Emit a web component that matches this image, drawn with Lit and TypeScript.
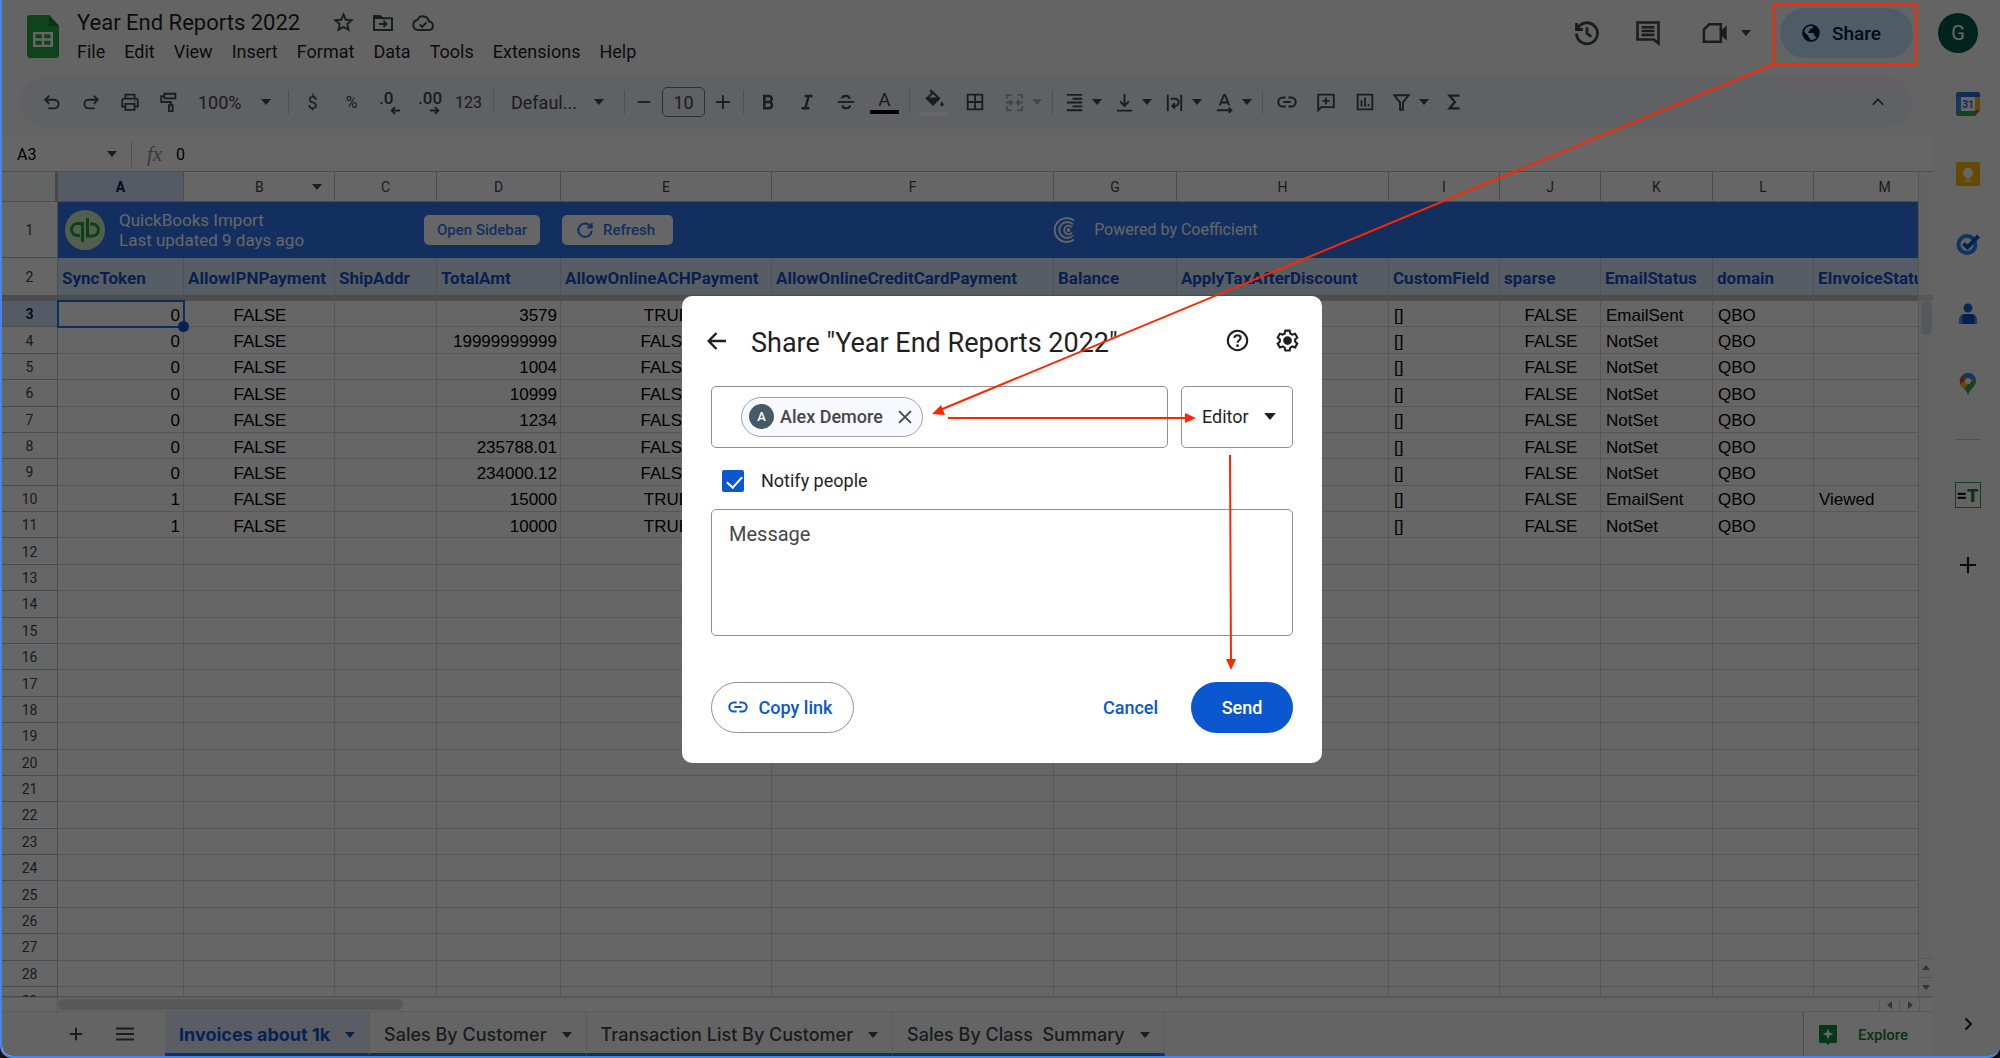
import { LitElement, html, css, svg, nothing } from "lit";
import { customElement } from "lit/decorators.js";
import { classMap } from "lit/directives/class-map.js";

/* ---------- icons (24 x 24 grid, stroked unless noted) ---------- */

const shapes: Record<string, unknown> = {
  star: svg`<path d="M12 3.500l2.400 5.700 6.100.5-4.600 4 1.400 6-5.300-3.200-5.300 3.200 1.400-6-4.600-4 6.100-.5z"/>`,
  move: svg`<path d="M3 5h6l2 2.200h10V19H3z"/><path d="M3 6.500h8" stroke-width="3"/><path d="M8 13h7M12.500 10l3 3-3 3"/>`,
  cloud: svg`<path d="M7 19a5 5 0 0 1-.6-9.900A6 6 0 0 1 17.900 10.500 4.300 4.300 0 0 1 18.500 19z"/><path d="M8.800 13.500l2.400 2.400 4.200-4.400"/>`,
  undo: svg`<path d="M5 9.500h9.500a4.700 4.700 0 0 1 0 9.400H8M9 5L4.600 9.500 9 14"/>`,
  redo: svg`<path d="M19 9.500H9.500a4.700 4.700 0 0 0 0 9.400H16M15 5l4.400 4.500L15 14"/>`,
  print: svg`<path d="M7 8V4h10v4M7 17H3.500v-6.500A2.200 2.200 0 0 1 5.700 8.300h12.600a2.200 2.200 0 0 1 2.200 2.200V17H17M7 14h10v6.500H7z"/><path d="M17 11.300h1"/>`,
  paint: svg`<path d="M7 3h12v5H7zM7 5.500H3.500V12H14v3"/><path d="M12 15.500h4V22h-4z"/>`,
  decDown: svg`<path d="M22 12H4M11 4.500L3.500 12l7.500 7.500"/>`,
  decUp: svg`<path d="M2 12h18M13 4.500l7.500 7.500-7.500 7.500"/>`,
  minus: svg`<path d="M5 12h14"/>`,
  plus: svg`<path d="M4.500 12h15M12 4.500v15"/>`,
  bold: svg`<path stroke-width="2.800" d="M8 5.500h4.800a3.200 3.200 0 0 1 0 6.400H8zM8 11.900h5.400a3.500 3.500 0 0 1 0 6.900H8z"/>`,
  italic: svg`<path stroke-width="2.600" d="M9.500 5.500h8.500M6 18.800h8.500M13.900 5.500l-3.800 13.300"/>`,
  strike: svg`<path d="M3 12h18"/><path stroke-width="2.300" d="M16 8.500c-.3-2-2-3.200-4.200-3.200-2.100 0-4 1-4 3M8 15.800c.3 2 2 3 4.200 3 2.300 0 4.200-1.100 4.200-3.300"/>`,
  fill: svg`<path d="M8 2l3 3"/><path d="M11 4.500l6 6-6 6-6-6z"/><path d="M5.500 10.500h11L11 16z" fill="currentColor"/><path d="M20 13.500c1 1.500 1.600 2.300 1.600 3.200a1.600 1.600 0 0 1-3.200 0c0-.9.600-1.700 1.600-3.200z" fill="currentColor" stroke="none"/>`,
  borders: svg`<path d="M4 4h16v16H4zM12 4v16M4 12h16"/>`,
  merge: svg`<path d="M9 4H4v4M15 4h5v4M9 20H4v-4M15 20h5v-4M3 12h6.500M14.500 12H21M7 9.300L9.700 12 7 14.700M17 9.300L14.300 12l2.700 2.700"/>`,
  halign: svg`<path d="M4 4h16M10 8h10M4 12h16M10 16h10M4 20h16"/>`,
  valign: svg`<path d="M12 3v12M7.500 11l4.500 4.500 4.500-4.500M4 20.500h16"/>`,
  wrap: svg`<path d="M5 4v17M19 4v17M8 8h4.500a3.800 3.800 0 0 1 0 7.600H10M12.500 12.800l-2.800 2.800 2.800 2.800"/>`,
  rotate: svg`<path d="M7 15L11.500 4h1L17 15M8.500 12h7M4 20h15M16.500 17.300l2.800 2.700-2.800 2.700"/>`,
  link: svg`<path stroke-width="2.200" d="M10.500 7H7.500a5 5 0 0 0 0 10h3M13.500 7h3a5 5 0 0 1 0 10h-3M8 12h8"/>`,
  comment: svg`<path d="M3.500 21V4h17v13.500H7zM12 7v7.500M8.200 10.800h7.600"/>`,
  chart: svg`<path d="M4 4h16v16H4zM8.200 10v7M12 7v10M15.800 14v3"/>`,
  filter: svg`<path d="M4.500 4.500h15L13.500 12v7.500h-3V12z"/>`,
  sigma: svg`<path stroke-width="2.400" d="M18 5H7l6 7-6 7h11"/>`,
  up: svg`<path d="M6.500 15l5.500-6 5.500 6"/>`,
  right: svg`<path d="M9.500 6.500l5.500 5.500-5.500 5.500"/>`,
  history: svg`<path d="M3.800 8.500A9 9 0 1 1 3 12.500M3 3.500V9h5.500M12 7v5.500l3.800 2.600"/>`,
  notes: svg`<path d="M3 3h18v18l-4-3.500H3z"/><path d="M6.500 7h11M6.500 10.300h11M6.500 13.600h11"/>`,
  meet: svg`<path d="M7 4.500h10v15H2.500V9z"/><path d="M17 11l4.500-4.500v11L17 13z" fill="currentColor" stroke-width="1"/>`,
  globe: svg`<circle cx="12" cy="12" r="9.500"/><path stroke="none" fill="currentColor" d="M2.800 9.500L9 15.500v1.500l2 2v2.800C5 21 1.500 15.500 2.800 9.500zM14.800 2.900V5l-2 2H10.800v2.200l-2 1v1.800h6l1 1v3h1.800l1.900 2.400C23.500 14 22.500 5.500 14.800 2.900z"/>`,
  menu: svg`<path d="M3 6.500h18M3 12h18M3 17.500h18"/>`,
  back: svg`<path d="M21 12H4M11.500 4L3.700 12l7.800 8"/>`,
  help: svg`<circle cx="12" cy="12" r="9.300"/><path d="M9 9.600c.2-1.700 1.400-2.600 3-2.600s3 1 3 2.500c0 2.200-3 2.400-3 4.700"/><circle cx="12" cy="17" r="1.300" fill="currentColor" stroke="none"/>`,
  gear: svg`<path d="M9.900 2.500h4.200l.6 2.800 1.900 1.100 2.700-.9 2.100 3.600-2.100 1.900v2.100l2.100 1.900-2.100 3.600-2.700-.9-1.900 1.100-.6 2.800H9.900l-.6-2.800-1.900-1.100-2.700.9-2.100-3.600 2.100-1.900v-2.100L2.600 9.100l2.100-3.600 2.700.9 1.900-1.100z"/><circle cx="12" cy="12" r="3.200" fill="currentColor"/>`,
  close: svg`<path d="M5.500 5.500l13 13M18.500 5.500l-13 13"/>`,
  reload: svg`<path stroke-width="2.400" d="M18.500 7.500A8 8 0 1 0 20 13M20 3.500V9h-5.500"/>`,
};

const icon = (name: string, size = 24, weight = 2) => html`<svg
  class="ico" width=${size} height=${size} viewBox="0 0 24 24" fill="none"
  stroke="currentColor" stroke-width=${weight} aria-hidden="true">${shapes[name]}</svg>`;

const caret = () => html`<svg class="caret" width="10" height="6" viewBox="0 0 10 6" aria-hidden="true">
  <path d="M0 0h10L5 6z" fill="currentColor"/></svg>`;

const sheetsLogo = html`<svg width="32" height="43" viewBox="0 0 32 43" aria-hidden="true">
  <path d="M3 0h19l10 11v29a3 3 0 0 1-3 3H3a3 3 0 0 1-3-3V3a3 3 0 0 1 3-3z" fill="#23a847"/>
  <path d="M22 0l10 11H22z" fill="#128034"/>
  <path d="M6 17h20v15H6zM8.500 19.300v4h6.300v-4zM17.200 19.300v4h6.300v-4zM8.500 25.700v4h6.300v-4zM17.200 25.700v4h6.300v-4z" fill="#fff" fill-rule="evenodd"/>
</svg>`;

const qbLogo = html`<svg width="40" height="40" viewBox="0 0 40 40" aria-hidden="true">
  <circle cx="20" cy="20" r="20" fill="#cdeec3"/>
  <g fill="none" stroke="#25a03b" stroke-width="3">
    <path d="M17.500 32V13.500H12.500a6 6 0 0 0 0 12h2.500"/>
    <path d="M22.500 8v18h5a6 6 0 0 0 0-12H25"/>
  </g></svg>`;

const coefficientLogo = html`<svg width="24" height="26" viewBox="0 0 24 26" fill="none" stroke="#fff" stroke-width="1.800" aria-hidden="true">
  <path d="M21 3.500A12 12 0 1 0 21 22.500"/><path d="M20 7.500A8 8 0 1 0 20 18.500"/><path d="M19 10.500A4.300 4.300 0 1 0 19 15.500"/>
  <circle cx="15.500" cy="13" r="1" fill="#fff"/></svg>`;

const sideIcons = [
  { label: "Calendar", art: html`<svg width="24" height="24" viewBox="0 0 24 24"><path d="M2 0h20v6H0V2a2 2 0 0 1 2-2z" fill="#2f6fe0"/><path d="M0 5h5v14H0z" fill="#4285f4"/><path d="M19 5h5v13h-5z" fill="#fbbc04"/><path d="M19 0h3a2 2 0 0 1 2 2v3h-5z" fill="#1967d2"/><path d="M0 19h19v5H2a2 2 0 0 1-2-2z" fill="#34a853"/><path d="M19 24v-6h5z" fill="#ea4335"/><path d="M5 5h14v14H5z" fill="#fff"/><text class="day" x="12" y="16" text-anchor="middle" fill="#1a73e8">31</text></svg>` },
  { label: "Keep", art: html`<svg width="24" height="24" viewBox="0 0 24 24"><rect width="24" height="24" rx="2" fill="#fbbc04"/><circle cx="12" cy="11" r="5" fill="#fff"/><path d="M10 14h4v2.500h-4zM9.500 18h5v1.500h-5z" fill="#fff"/></svg>` },
  { label: "Tasks", art: html`<svg width="24" height="24" viewBox="0 0 24 24" fill="none"><circle cx="11" cy="12.500" r="8.500" stroke="#2684fc" stroke-width="4"/><path d="M7.500 11.500l4 4L22.500 4" stroke="#0b57d0" stroke-width="4"/></svg>` },
  { label: "Contacts", art: html`<svg width="24" height="24" viewBox="0 0 24 24"><circle cx="12" cy="6" r="4.500" fill="#1a62e0"/><path d="M8 12h8a5 5 0 0 1 5 5v5H3v-5a5 5 0 0 1 5-5z" fill="#5c8fef"/><path d="M9.500 12h6a3 3 0 0 1 3 3v7h-11a1 1 0 0 1-1-1v-6a3 3 0 0 1 3-3z" fill="#0b50c8"/></svg>` },
  { label: "Maps", art: html`<svg width="24" height="24" viewBox="0 0 24 24"><path d="M12 1a8 8 0 0 1 8 8c0 5.500-6 7.500-8 14-2-6.500-8-8.500-8-14a8 8 0 0 1 8-8z" fill="#34a853"/><path d="M12 1a8 8 0 0 1 7.500 5.200L12 9 6.500 3.200A8 8 0 0 1 12 1z" fill="#4285f4"/><path d="M6.500 3.200L12 9l-7.200 4A8 8 0 0 1 6.500 3.200z" fill="#ea4335"/><path d="M17 8l-9.500 9c-1.500-1.800-2.700-3-3.200-5l6-5z" fill="#fbbc04"/><circle cx="12" cy="9" r="3" fill="#fff"/></svg>` },
];

/* ---------- sheet data ---------- */

interface Column { letter: string; title: string; align: string }
const columns: Column[] = [
  { letter: "A", title: "SyncToken", align: "end" },
  { letter: "B", title: "AllowIPNPayment", align: "mid" },
  { letter: "C", title: "ShipAddr", align: "start" },
  { letter: "D", title: "TotalAmt", align: "end" },
  { letter: "E", title: "AllowOnlineACHPayment", align: "mid" },
  { letter: "F", title: "AllowOnlineCreditCardPayment", align: "mid" },
  { letter: "G", title: "Balance", align: "end" },
  { letter: "H", title: "ApplyTaxAfterDiscount", align: "mid" },
  { letter: "I", title: "CustomField", align: "start" },
  { letter: "J", title: "sparse", align: "mid" },
  { letter: "K", title: "EmailStatus", align: "start" },
  { letter: "L", title: "domain", align: "start" },
  { letter: "M", title: "EInvoiceStatus", align: "start" },
];

const record = (token: string, total: string, ach: string, email: string, viewed = "") =>
  [token, "FALSE", "", total, ach, "", "", "", "[]", "FALSE", email, "QBO", viewed];

const records: string[][] = [
  record("0", "3579", "TRUE", "EmailSent"),
  record("0", "19999999999", "FALSE", "NotSet"),
  record("0", "1004", "FALSE", "NotSet"),
  record("0", "10999", "FALSE", "NotSet"),
  record("0", "1234", "FALSE", "NotSet"),
  record("0", "235788.01", "FALSE", "NotSet"),
  record("0", "234000.12", "FALSE", "NotSet"),
  record("1", "15000", "TRUE", "EmailSent", "Viewed"),
  record("1", "10000", "TRUE", "NotSet"),
];

const base = css`
  * { box-sizing: border-box; }
  button, input, select, textarea { font: inherit; color: inherit; background: none; border: 0; padding: 0; margin: 0; border-radius: 0; outline: none; }
  button { display: flex; align-items: center; justify-content: center; white-space: nowrap; }
  select { appearance: none; }
  svg { display: block; flex: none; }
`;

@customElement("sheet-header")
export class SheetHeader extends LitElement {
  static styles = [base, css`
    :host { display: flex; align-items: center; height: 77px; padding: 0 22px 0 25px; color: #444746; }
    .logo { padding-bottom: 4px; }
    .doc { flex: 1; padding: 4px 0 0 18px; align-self: flex-start; }
    .line { display: flex; align-items: center; gap: 16px; height: 35px; padding-top: 2px; }
    .title { margin: 0 16px 0 0; font-size: 22px; font-weight: 400; line-height: 32px; color: #1f1f1f; white-space: nowrap; }
    .menus { display: flex; gap: 19px; height: 26px; color: #1f1f1f; font-size: 18px; line-height: 26px; }
    .actions { display: flex; align-items: center; align-self: flex-start; height: 66px; }
    .tool { width: 61px; height: 40px; }
    .meet { width: 73px; gap: 12px; justify-content: flex-end; }
    .share { gap: 11px; width: 133px; height: 50px; margin-left: 29px; padding-left: 21px; justify-content: flex-start; border-radius: 25px; background: #c2e7ff; color: #001d35; font-size: 19px; font-weight: 500; }
    .avatar { width: 40px; height: 40px; margin-left: 25px; border-radius: 50%; background: #00594a; color: #fff; font-size: 20px; }
  `];

  render() {
    const menus = ["File", "Edit", "View", "Insert", "Format", "Data", "Tools", "Extensions", "Help"];
    return html`
      <div class="logo">${sheetsLogo}</div>
      <div class="doc">
        <div class="line">
          <h1 class="title">Year End Reports 2022</h1>
          <button aria-label="Star">${icon("star", 23)}</button>
          <button aria-label="Move">${icon("move", 24)}</button>
          <button aria-label="Saved to Drive">${icon("cloud", 24)}</button>
        </div>
        <nav class="menus">${menus.map((m) => html`<button>${m}</button>`)}</nav>
      </div>
      <div class="actions">
        <button class="tool" aria-label="Version history">${icon("history", 28, 2.4)}</button>
        <button class="tool" aria-label="Comments">${icon("notes", 28, 2.2)}</button>
        <button class="tool meet" aria-label="Join a call">${icon("meet", 28, 2.2)}${caret()}</button>
        <button class="share">${icon("globe", 20, 2)}Share</button>
        <button class="avatar" aria-label="Account G">G</button>
      </div>`;
  }
}

@customElement("sheet-toolbar")
export class SheetToolbar extends LitElement {
  static styles = [base, css`
    :host { display: flex; align-items: center; height: 50px; margin: 0 21px 0 18px; padding: 0 15px 0 12px; border-radius: 25px; background: #edf2fa; color: #444746; font-size: 18px; }
    .slot { width: 39px; height: 36px; flex: none; }
    .wide { width: 44px; }
    .step { width: 30px; }
    .split { width: 50px; gap: 6px; }
    .off { opacity: 0.4; }
    .small { font-size: 16px; }
    .rule { flex: none; width: 10px; height: 24px; display: flex; justify-content: center; }
    .rule::before { content: ""; width: 1px; background: #c7cad0; }
    .pick { display: flex; align-items: center; width: 95px; height: 36px; padding: 0 12px 0 10px; flex: none; }
    .pick.font { width: 121px; padding: 0 15px 0 13px; }
    .pick select { flex: 1; min-width: 0; }
    .size { flex: none; width: 43px; height: 30px; margin: 0 3px; border: 1px solid #747775; border-radius: 5px; text-align: center; }
    .stack { flex-direction: column; }
    .stack .bar { width: 29px; height: 4px; background: #000; }
    .stack .bar.pale { background: #fff; }
    .glyph { line-height: 20px; font-size: 19px; }
    .dec { flex-direction: column; align-items: flex-start; padding-left: 8px; line-height: 16px; font-size: 17px; font-weight: 500; }
    .dec .ico { margin: -1px 0 -2px 11px; }
    .fold { margin-left: auto; }
  `];

  private tool(name: string, label: string, cls = "") {
    return html`<button class="slot ${cls}" aria-label=${label}>${icon(name, 22)}</button>`;
  }

  private split(name: string, label: string, off = false) {
    return html`<button class=${classMap({ slot: true, split: true, off })} aria-label=${label}>${icon(name, 23)}${caret()}</button>`;
  }

  render() {
    const rule = html`<span class="rule"></span>`;
    return html`
      ${this.tool("undo", "Undo")}${this.tool("redo", "Redo")}${this.tool("print", "Print")}${this.tool("paint", "Paint format")}
      <label class="pick"><select aria-label="Zoom"><option>100%</option></select>${caret()}</label>
      ${rule}
      <button class="slot">$</button>
      <button class="slot small">%</button>
      <button class="slot dec" aria-label="Fewer decimals">.0${icon("decDown", 11, 4)}</button>
      <button class="slot dec" aria-label="More decimals">.00${icon("decUp", 11, 4)}</button>
      <button class="slot small">123</button>
      ${rule}
      <label class="pick font"><select aria-label="Font"><option>Defaul...</option></select>${caret()}</label>
      ${rule}
      ${this.tool("minus", "Smaller", "step")}
      <input class="size" aria-label="Font size" value="10">
      ${this.tool("plus", "Larger", "step")}
      ${rule}
      ${this.tool("bold", "Bold")}${this.tool("italic", "Italic")}${this.tool("strike", "Strikethrough")}
      <button class="slot stack" aria-label="Text color"><span class="glyph">A</span><span class="bar"></span></button>
      ${rule}
      <button class="slot stack" aria-label="Fill color">${icon("fill", 24)}<span class="bar pale"></span></button>
      ${this.tool("borders", "Borders", "wide")}
      ${this.split("merge", "Merge cells", true)}
      ${rule}
      ${this.split("halign", "Horizontal align")}${this.split("valign", "Vertical align")}${this.split("wrap", "Text wrapping")}${this.split("rotate", "Text rotation")}
      ${rule}
      ${this.tool("link", "Insert link")}${this.tool("comment", "Insert comment")}${this.tool("chart", "Insert chart")}
      ${this.split("filter", "Create a filter")}
      ${this.tool("sigma", "Functions")}
      ${this.tool("up", "Hide the menus", "fold")}`;
  }
}

@customElement("sheet-grid")
export class SheetGrid extends LitElement {
  static styles = [base, css`
    :host { flex: 1; min-height: 0; display: grid; grid-template-columns: minmax(0, 1fr) 14px; grid-template-rows: minmax(0, 1fr) 14px; background: #fff; border-top: 1px solid #c0c0c0; }
    .clip { overflow: hidden; border-right: 1px solid #d5d5d5; }
    .table { display: grid; height: 100%; grid-template-rows: 30px 56px 43px repeat(26, minmax(0, 1fr)) 10px; border-spacing: 0; font-family: "Liberation Sans", Arial, sans-serif; font-size: 17px; line-height: 20px; color: #000; }
    .group { display: contents; }
    .row { display: grid; min-height: 0; overflow: hidden; grid-template-columns: 56px 126px 151px 102px 124px 211px 282px 123px 212px 111px 101px 112px 101px 142px; }
    .row.current { overflow: visible; }
    .cell { display: flex; align-items: center; min-width: 0; min-height: 0; overflow: hidden; padding: 4px 4px 0; border: solid #dadada; border-width: 0 1px 1px 0; white-space: nowrap; }
    .start { padding-left: 5px; }
    .end { justify-content: flex-end; padding-right: 3px; }
    .mid { justify-content: center; padding-left: 6px; }
    .head { justify-content: center; padding: 1px 0 0; border-color: #c0c0c0; font-family: Roboto, sans-serif; font-size: 14px; font-weight: 400; color: #444746; }
    .head.picked { background: #d3e3fd; color: #041e49; font-weight: 700; }
    .corner { background: #f8f9fa; border-right: 3px solid #b7b7b7; }
    .head.has-menu { justify-content: flex-start; padding-left: 71px; gap: 48px; }
    .last { overflow: visible; align-items: flex-start; line-height: 26px; }
    .banner { grid-column: 2 / -1; display: flex; align-items: center; background: #2d75ee; color: #fff; font-family: Roboto, sans-serif; padding: 0 0 0 7px; overflow: hidden; }
    .sync { width: 319px; padding-left: 14px; font-size: 17px; line-height: 20px; white-space: nowrap; }
    .chip { height: 30px; padding: 0 13px; margin-right: 22px; border-radius: 5px; background: #fff; color: #2d75ee; font-size: 15px; font-weight: 500; }
    .chip.refresh { gap: 8px; padding-right: 18px; }
    .powered { display: flex; align-items: center; gap: 17px; margin-left: 358px; font-size: 16px; white-space: nowrap; }
    .titles .cell { border-bottom: 6px solid #c0c0c0; }
    .titles .field { padding: 2px 4px 0; background: #dae8fb; border-right-color: #c3ccd9; font-family: Roboto, sans-serif; font-size: 17px; font-weight: 700; color: #1450c8; }
    .focus { position: relative; overflow: visible; outline: 2px solid #1a73e8; outline-offset: -1px; }
    .focus::after { content: ""; position: absolute; right: -6px; bottom: -6px; width: 11px; height: 11px; border-radius: 50%; background: #0b57d0; }
    .vbar { display: flex; flex-direction: column; background: #f8f8f8; }
    .vtop { height: 123px; }
    .vstop { height: 6px; background: #dadce0; }
    .vthumb { width: 11px; height: 34px; margin: 0 auto; border-radius: 6px; background: #dadce0; }
    .arrows { display: flex; flex-direction: column; margin-top: auto; color: #80868b; border-top: 1px solid #e0e0e0; }
    .arrow { width: 14px; height: 19px; border-bottom: 1px solid #d5d5d5; }
    .hbar { grid-column: 1 / -1; display: flex; align-items: center; border-top: 1px solid #e0e0e0; color: #80868b; }
    .hgap { width: 56px; align-self: stretch; border-right: 1px solid #d5d5d5; }
    .hthumb { width: 345px; height: 11px; border-radius: 6px; background: #dadce0; }
    .harrow { width: 20px; height: 13px; border-left: 1px solid #e0e0e0; }
    .harrow.first { margin-left: auto; }
    .hend { width: 14px; height: 13px; border-left: 1px solid #e0e0e0; }
  `];

  private bodyRow(n: number) {
    const values = records[n - 3];
    const current = n === 3;
    return html`<tr class=${classMap({ row: true, current })}>
      <th class=${classMap({ cell: true, head: true, picked: current, last: n === 29 })} scope="row">${n}</th>
      ${columns.map((c, i) => html`<td class=${classMap({ cell: true, [c.align]: true, focus: current && i === 0 })}>${values ? values[i] : nothing}</td>`)}
    </tr>`;
  }

  private arrow(d: string, cls: string, label: string) {
    return html`<button class=${cls} aria-label=${label}><svg width="8" height="8" viewBox="0 0 8 8"><path d=${d} fill="currentColor"/></svg></button>`;
  }

  render() {
    const numbers = Array.from({ length: 27 }, (_, i) => i + 3);
    return html`
      <div class="clip">
        <table class="table">
          <thead class="group">
            <tr class="row">
              <th class="cell head corner"></th>
              ${columns.map((c) => html`<th scope="col" class=${classMap({ cell: true, head: true, picked: c.letter === "A", "has-menu": c.letter === "B" })}>${c.letter}${c.letter === "B" ? caret() : nothing}</th>`)}
            </tr>
          </thead>
          <tbody class="group">
            <tr class="row">
              <th class="cell head" scope="row">1</th>
              <td class="banner" colspan="13">
                ${qbLogo}
                <div class="sync">QuickBooks Import<br>Last updated 9 days ago</div>
                <button class="chip">Open Sidebar</button>
                <button class="chip refresh">${icon("reload", 20)}Refresh</button>
                <div class="powered">${coefficientLogo}Powered by Coefficient</div>
              </td>
            </tr>
            <tr class="row titles">
              <th class="cell head" scope="row">2</th>
              ${columns.map((c) => html`<td class="cell field">${c.title}</td>`)}
            </tr>
            ${numbers.map((n) => this.bodyRow(n))}
          </tbody>
        </table>
      </div>
      <div class="vbar">
        <span class="vtop"></span><span class="vstop"></span><span class="vthumb"></span>
        <div class="arrows">${this.arrow("M0 6h8L4 1z", "arrow", "Scroll up")}${this.arrow("M0 2h8L4 7z", "arrow", "Scroll down")}</div>
      </div>
      <div class="hbar">
        <span class="hgap"></span><span class="hthumb"></span>
        ${this.arrow("M6 0v8L1 4z", "harrow first", "Scroll left")}${this.arrow("M2 0v8l5-4z", "harrow", "Scroll right")}
        <span class="hend"></span>
      </div>`;
  }
}

@customElement("sheet-tabs")
export class SheetTabs extends LitElement {
  static styles = [base, css`
    :host { display: flex; height: 45px; background: #f9fbfd; border-top: 1px solid #e1e3e6; color: #444746; font-family: Inter, Roboto, sans-serif; font-size: 18px; font-weight: 500; }
    .tools { display: flex; align-items: center; width: 163px; padding-left: 49px; }
    .tool { width: 49px; height: 36px; }
    .tab { gap: 15px; padding: 4px 14px 0; border-bottom: 3px solid #2d75ee; border-right: 1px solid #dfe3ea; white-space: pre; }
    .tab.active { background: #e1e9f7; color: #0b57d0; font-weight: 700; }
    .explore { gap: 21px; width: 130px; margin-left: auto; padding: 2px 10px 0 0; border-left: 1px solid #c0c0c0; background: #fff; color: #188038; font-family: Roboto, sans-serif; font-size: 15px; }
  `];

  render() {
    const tabs = ["Invoices about 1k", "Sales By Customer", "Transaction List By Customer", "Sales By Class  Summary"];
    return html`
      <div class="tools">
        <button class="tool" aria-label="Add sheet">${icon("plus", 20, 2.4)}</button>
        <button class="tool" aria-label="All sheets">${icon("menu", 24)}</button>
      </div>
      ${tabs.map((t, i) => html`<button class=${classMap({ tab: true, active: i === 0 })}>${t}${caret()}</button>`)}
      <button class="explore">
        <svg width="18" height="20" viewBox="0 0 18 20" aria-hidden="true"><path d="M1 0h16a1 1 0 0 1 1 1v16a1 1 0 0 1-1 1h-6l-2 2-2-2H1a1 1 0 0 1-1-1V1a1 1 0 0 1 1-1z" fill="#0f8a43"/><path d="M9 3.500l1.500 4L14.500 9l-4 1.500L9 14.500l-1.500-4-4-1.500 4-1.500z" fill="#fff"/></svg>
        Explore
      </button>`;
  }
}

@customElement("share-dialog")
export class ShareDialog extends LitElement {
  static styles = [base, css`
    :host { display: flex; flex-direction: column; width: 640px; padding: 23px 29px 30px; border-radius: 10px; background: #fff; color: #1f1f1f; font-size: 18px; }
    .top { display: flex; align-items: center; height: 44px; margin-right: -7px; }
    .back { width: 24px; height: 40px; margin-left: -6px; }
    .title { flex: 1; margin: 0 0 0 22px; padding-top: 5px; font-size: 27px; font-weight: 400; line-height: 36px; }
    .act { width: 26px; height: 40px; margin-left: 24px; }
    .who { display: flex; gap: 13px; margin-top: 23px; }
    .people { flex: 1; display: flex; align-items: center; height: 62px; padding-left: 29px; border: 1px solid #8e918f; border-radius: 5px; }
    .people input { flex: 1; min-width: 0; height: 40px; }
    .chip { display: flex; align-items: center; width: 182px; height: 40px; padding: 0 7px; border: 1px solid #a0a2a5; border-radius: 20px; background: #f8f9ff; color: #444746; font-size: 18px; font-weight: 500; white-space: nowrap; }
    .face { display: flex; align-items: center; justify-content: center; width: 25px; height: 25px; margin-right: 6px; border-radius: 50%; background: #455a64; color: #fff; font-size: 13px; }
    .drop { margin-left: auto; width: 20px; height: 26px; }
    .role { display: flex; align-items: center; width: 112px; height: 62px; padding: 0 16px 0 20px; border: 1px solid #8e918f; border-radius: 5px; }
    .role select { flex: 1; min-width: 0; height: 40px; }
    .role .caret { width: 12px; height: 7px; }
    .notify { display: flex; align-items: center; gap: 17px; height: 26px; margin: 20px 0 15px 11px; }
    .box { appearance: none; position: relative; width: 22px; height: 22px; border-radius: 2px; background: #0b57d0; }
    .box::after { content: ""; position: absolute; left: 8px; top: 3px; width: 7px; height: 13px; border: solid #fff; border-width: 0 2px 2px 0; rotate: 42deg; }
    .message { display: block; width: 100%; height: 127px; padding: 11px 17px; border: 1px solid #8e918f; border-radius: 5px; resize: none; font-size: 20px; line-height: 26px; }
    .message::placeholder { color: #444746; opacity: 1; }
    .foot { display: flex; margin-top: 46px; font-weight: 500; color: #0b57d0; }
    .copy { gap: 10px; width: 143px; height: 51px; padding-right: 6px; border: 1px solid #8e918f; border-radius: 26px; }
    .cancel { margin-left: auto; width: 121px; }
    .send { width: 102px; border-radius: 26px; background: #0b57d0; color: #fff; }
  `];

  render() {
    return html`
      <div class="top">
        <button class="back" aria-label="Back">${icon("back", 24, 2.4)}</button>
        <h2 class="title">Share "Year End Reports 2022"</h2>
        <button class="act" aria-label="Help">${icon("help", 25)}</button>
        <button class="act" aria-label="Settings">${icon("gear", 25)}</button>
      </div>
      <div class="who">
        <div class="people">
          <span class="chip"><span class="face">A</span>Alex Demore<button class="drop" aria-label="Remove Alex Demore">${icon("close", 22)}</button></span>
          <input aria-label="Add people">
        </div>
        <label class="role"><select aria-label="Role"><option>Editor</option></select>${caret()}</label>
      </div>
      <label class="notify"><input class="box" type="checkbox" checked>Notify people</label>
      <textarea class="message" aria-label="Message" placeholder="Message"></textarea>
      <div class="foot">
        <button class="copy">${icon("link", 22)}Copy link</button>
        <button class="cancel">Cancel</button>
        <button class="send">Send</button>
      </div>`;
  }
}

@customElement("app-root")
export class AppRoot extends LitElement {
  static styles = [base, css`
    :host { display: block; background: #170c0f; font-family: Roboto, "Liberation Sans", sans-serif; }
    .window { position: relative; display: flex; flex-direction: column; height: 100vh; overflow: hidden; border: solid #4a84e4; border-width: 0 0 2px 2px; border-radius: 0 0 12px 12px; background: #f9fbfd; }
    .body { flex: 1; min-height: 0; display: grid; grid-template-columns: minmax(0, 1fr) 67px; }
    .main { display: flex; flex-direction: column; min-height: 0; }
    .formula { display: flex; align-items: center; height: 35px; margin-top: 9px; padding-top: 1px; background: #fff; color: #444746; font-size: 16px; }
    .name { display: flex; align-items: center; width: 130px; height: 26px; padding: 0 14px 0 15px; border-right: 1px solid #c7c7c7; }
    .name input, .value { flex: 1; min-width: 0; color: #000; }
    .fx { width: 44px; padding-left: 15px; font-family: "Liberation Serif", serif; font-style: italic; font-size: 21px; color: #8b8f94; }
    .side { display: flex; flex-direction: column; align-items: center; color: #1f1f1f; padding: 15px 0 0 2px; }
    .app { width: 40px; height: 24px; margin-bottom: 46px; }
    .app:last-of-type { margin-bottom: 44px; }
    .day { font: 700 10px Roboto, sans-serif; }
    .rule { width: 26px; height: 1px; margin: -3px 0 42px; background: #c7c9cc; }
    .addon { width: 26px; height: 26px; margin-bottom: 44px; border: 1px solid #2e9e4f; font-size: 18px; font-weight: 900; color: #1f1f1f; }
    .addon .tee { color: #15803a; }
    .hide { margin-top: auto; padding-bottom: 20px; }
    .scrim { position: absolute; inset: 0 -2px -2px 0; display: flex; align-items: center; justify-content: center; background: rgba(0, 0, 0, 0.6); }
    .marks { position: absolute; inset: 0; width: 100%; height: 100%; pointer-events: none; }
  `];

  render() {
    return html`
      <div class="window">
        <sheet-header></sheet-header>
        <div class="body">
          <div class="main">
            <sheet-toolbar></sheet-toolbar>
            <div class="formula">
              <label class="name"><input aria-label="Name box" value="A3">${caret()}</label>
              <span class="fx">fx</span>
              <input class="value" aria-label="Formula" value="0">
            </div>
            <sheet-grid></sheet-grid>
            <sheet-tabs></sheet-tabs>
          </div>
          <aside class="side">
            ${sideIcons.map((s) => html`<button class="app" aria-label=${s.label}>${s.art}</button>`)}
            <span class="rule"></span>
            <button class="addon">=<span class="tee">T</span></button>
            <button aria-label="Get add-ons">${icon("plus", 26, 2)}</button>
            <button class="hide" aria-label="Hide side panel">${icon("right", 24)}</button>
          </aside>
        </div>
        <div class="scrim"><share-dialog></share-dialog></div>
        <svg class="marks" viewBox="0 0 1998 1056" fill="none" stroke="#ff2600" stroke-width="2" aria-hidden="true">
          <path d="M1772 4h142v60h-142zM1772 64L938 410M946 418h242M1228 455l1 207"/>
          <path stroke="none" fill="#ff2600" d="M930 414l9-9 4 10zM1194 418l-11-5v10zM1229 670l-5-11h10z"/>
        </svg>
      </div>`;
  }
}
